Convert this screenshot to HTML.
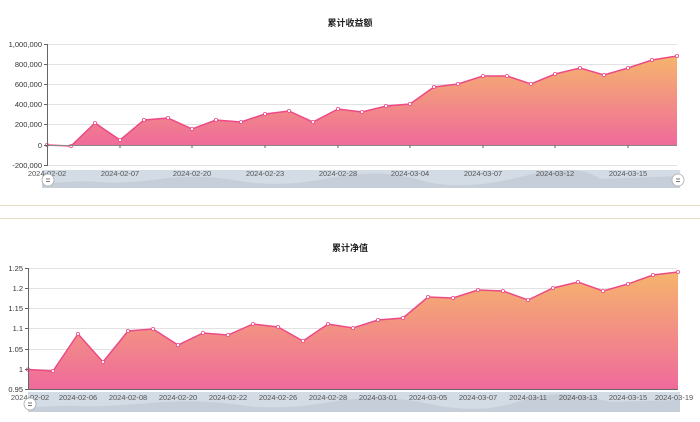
<!DOCTYPE html>
<html><head><meta charset="utf-8"><style>
html,body{margin:0;padding:0;background:#fff;width:700px;height:422px;overflow:hidden}
svg text{font-family:"Liberation Sans","Noto Sans CJK SC",sans-serif}
</style></head><body>
<svg width="700" height="422" viewBox="0 0 700 422" xmlns="http://www.w3.org/2000/svg">
<defs>
<linearGradient id="g1" x1="0" y1="0" x2="0" y2="1">
<stop offset="0" stop-color="#f6b46c"/><stop offset="1" stop-color="#ef6a9c"/></linearGradient>
</defs>
<!-- Chart 1 -->
<text x="350" y="26" font-size="9" font-weight="bold" text-anchor="middle" fill="#222">累计收益额</text>
<g stroke="#e2e2e2" stroke-width="1">
<line x1="47" y1="44.5" x2="677" y2="44.5"/><line x1="47" y1="64.5" x2="677" y2="64.5"/>
<line x1="47" y1="84.5" x2="677" y2="84.5"/><line x1="47" y1="104.5" x2="677" y2="104.5"/>
<line x1="47" y1="124.5" x2="677" y2="124.5"/><line x1="47" y1="165.5" x2="677" y2="165.5"/>
</g>
<polygon fill="url(#g1)" points="47,145 71,146 95,123 120,140 144,120 168,118 192,129 216,120 241,122 265,114 289,111 313,122 338,109 362,112 386,106 410,104 434,87 458,84 483,76 507,76 531,84 555,74 580,68 604,75 628,68 652,60 677,56 677,145"/>
<polyline fill="none" stroke="#ec4a86" stroke-width="1.5" points="47,145 71,146 95,123 120,140 144,120 168,118 192,129 216,120 241,122 265,114 289,111 313,122 338,109 362,112 386,106 410,104 434,87 458,84 483,76 507,76 531,84 555,74 580,68 604,75 628,68 652,60 677,56"/>
<g fill="#fff" stroke="#ec4a86" stroke-width="0.8">
<circle cx="47" cy="145" r="1.6"/><circle cx="71" cy="146" r="1.6"/><circle cx="95" cy="123" r="1.6"/><circle cx="120" cy="140" r="1.6"/><circle cx="144" cy="120" r="1.6"/><circle cx="168" cy="118" r="1.6"/><circle cx="192" cy="129" r="1.6"/><circle cx="216" cy="120" r="1.6"/><circle cx="241" cy="122" r="1.6"/><circle cx="265" cy="114" r="1.6"/><circle cx="289" cy="111" r="1.6"/><circle cx="313" cy="122" r="1.6"/><circle cx="338" cy="109" r="1.6"/><circle cx="362" cy="112" r="1.6"/><circle cx="386" cy="106" r="1.6"/><circle cx="410" cy="104" r="1.6"/><circle cx="434" cy="87" r="1.6"/><circle cx="458" cy="84" r="1.6"/><circle cx="483" cy="76" r="1.6"/><circle cx="507" cy="76" r="1.6"/><circle cx="531" cy="84" r="1.6"/><circle cx="555" cy="74" r="1.6"/><circle cx="580" cy="68" r="1.6"/><circle cx="604" cy="75" r="1.6"/><circle cx="628" cy="68" r="1.6"/><circle cx="652" cy="60" r="1.6"/><circle cx="677" cy="56" r="1.6"/>
</g>
<line x1="47" y1="145.5" x2="677" y2="145.5" stroke="#888" stroke-width="1"/>
<line x1="47.5" y1="44" x2="47.5" y2="166" stroke="#666" stroke-width="1"/>
<g stroke="#666"><line x1="44" y1="44.5" x2="47" y2="44.5"/><line x1="44" y1="64.5" x2="47" y2="64.5"/><line x1="44" y1="84.5" x2="47" y2="84.5"/><line x1="44" y1="104.5" x2="47" y2="104.5"/><line x1="44" y1="124.5" x2="47" y2="124.5"/><line x1="44" y1="145.5" x2="47" y2="145.5"/><line x1="44" y1="165.5" x2="47" y2="165.5"/>
<line x1="120" y1="145" x2="120" y2="148"/><line x1="192" y1="145" x2="192" y2="148"/><line x1="265" y1="145" x2="265" y2="148"/><line x1="338" y1="145" x2="338" y2="148"/><line x1="410" y1="145" x2="410" y2="148"/><line x1="483" y1="145" x2="483" y2="148"/><line x1="555" y1="145" x2="555" y2="148"/><line x1="628" y1="145" x2="628" y2="148"/></g>
<g font-size="7.5" fill="#333" text-anchor="end">
<text x="42" y="47">1,000,000</text><text x="42" y="67">800,000</text><text x="42" y="87">600,000</text><text x="42" y="107">400,000</text><text x="42" y="127">200,000</text><text x="42" y="148">0</text><text x="42" y="168">-200,000</text></g>
<rect x="42" y="170" width="638" height="18" fill="#d3dbe5"/>
<path d="M42,184 Q80,180 100,182 T160,179 T240,181 T330,178 T420,180 T520,177 T600,179 L680,176 L680,188 L42,188Z" fill="#c6ced9"/>
<g font-size="7.5" fill="#555" text-anchor="middle">
<text x="47" y="176">2024-02-02</text><text x="120" y="176">2024-02-07</text><text x="192" y="176">2024-02-20</text><text x="265" y="176">2024-02-23</text><text x="338" y="176">2024-02-28</text><text x="410" y="176">2024-03-04</text><text x="483" y="176">2024-03-07</text><text x="555" y="176">2024-03-12</text><text x="628" y="176">2024-03-15</text></g>
<g><circle cx="48" cy="180" r="6" fill="#fff" stroke="#aaa" stroke-width="0.8"/><line x1="46" y1="179" x2="50" y2="179" stroke="#777"/><line x1="46" y1="181.5" x2="50" y2="181.5" stroke="#777"/>
<circle cx="678" cy="180" r="6" fill="#fff" stroke="#aaa" stroke-width="0.8"/><line x1="676" y1="179" x2="680" y2="179" stroke="#777"/><line x1="676" y1="181.5" x2="680" y2="181.5" stroke="#777"/></g>
<line x1="0" y1="205.5" x2="700" y2="205.5" stroke="#e8dcc0"/>
<line x1="0" y1="218.5" x2="700" y2="218.5" stroke="#e8dcc0"/>
<!-- Chart 2 -->
<text x="350" y="251" font-size="9" font-weight="bold" text-anchor="middle" fill="#222">累计净值</text>
<g stroke="#e2e2e2"><line x1="28" y1="268.5" x2="677" y2="268.5"/><line x1="28" y1="288.5" x2="677" y2="288.5"/><line x1="28" y1="308.5" x2="677" y2="308.5"/><line x1="28" y1="328.5" x2="677" y2="328.5"/><line x1="28" y1="349.5" x2="677" y2="349.5"/><line x1="28" y1="369.5" x2="677" y2="369.5"/></g>
<polygon fill="url(#g1)" points="28,369.5 53,371 78,334 103,362 128,331 153,329 178,345 203,333 228,335 253,324 278,327 303,341 328,324 353,328 378,320 403,318 428,297 453,298 478,290 503,291 528,300 553,288 578,282 603,291 628,284 653,275 678,272 678,389 28,389"/>
<polyline fill="none" stroke="#ec4a86" stroke-width="1.5" points="28,369.5 53,371 78,334 103,362 128,331 153,329 178,345 203,333 228,335 253,324 278,327 303,341 328,324 353,328 378,320 403,318 428,297 453,298 478,290 503,291 528,300 553,288 578,282 603,291 628,284 653,275 678,272"/>
<g fill="#fff" stroke="#ec4a86" stroke-width="0.8">
<circle cx="28" cy="369.5" r="1.6"/><circle cx="53" cy="371" r="1.6"/><circle cx="78" cy="334" r="1.6"/><circle cx="103" cy="362" r="1.6"/><circle cx="128" cy="331" r="1.6"/><circle cx="153" cy="329" r="1.6"/><circle cx="178" cy="345" r="1.6"/><circle cx="203" cy="333" r="1.6"/><circle cx="228" cy="335" r="1.6"/><circle cx="253" cy="324" r="1.6"/><circle cx="278" cy="327" r="1.6"/><circle cx="303" cy="341" r="1.6"/><circle cx="328" cy="324" r="1.6"/><circle cx="353" cy="328" r="1.6"/><circle cx="378" cy="320" r="1.6"/><circle cx="403" cy="318" r="1.6"/><circle cx="428" cy="297" r="1.6"/><circle cx="453" cy="298" r="1.6"/><circle cx="478" cy="290" r="1.6"/><circle cx="503" cy="291" r="1.6"/><circle cx="528" cy="300" r="1.6"/><circle cx="553" cy="288" r="1.6"/><circle cx="578" cy="282" r="1.6"/><circle cx="603" cy="291" r="1.6"/><circle cx="628" cy="284" r="1.6"/><circle cx="653" cy="275" r="1.6"/><circle cx="678" cy="272" r="1.6"/>
</g>
<line x1="28" y1="389.5" x2="678" y2="389.5" stroke="#666"/>
<line x1="28.5" y1="268" x2="28.5" y2="390" stroke="#666"/>
<g stroke="#666"><line x1="25" y1="268.5" x2="28" y2="268.5"/><line x1="25" y1="288.5" x2="28" y2="288.5"/><line x1="25" y1="308.5" x2="28" y2="308.5"/><line x1="25" y1="328.5" x2="28" y2="328.5"/><line x1="25" y1="349.5" x2="28" y2="349.5"/><line x1="25" y1="369.5" x2="28" y2="369.5"/><line x1="25" y1="389.5" x2="28" y2="389.5"/></g>
<g font-size="7.5" fill="#333" text-anchor="end">
<text x="23" y="271">1.25</text><text x="23" y="291">1.2</text><text x="23" y="311">1.15</text><text x="23" y="331">1.1</text><text x="23" y="352">1.05</text><text x="23" y="372">1</text><text x="23" y="392">0.95</text></g>
<rect x="28" y="392" width="652" height="20" fill="#d3dbe5"/>
<path d="M28,408 Q60,405 80,406 T150,403 T240,405 T330,402 T430,404 T520,401 T610,402 L680,400 L680,412 L28,412Z" fill="#c6ced9"/>
<g font-size="7.5" fill="#555" text-anchor="middle">
<text x="30" y="400">2024-02-02</text><text x="78" y="400">2024-02-06</text><text x="128" y="400">2024-02-08</text><text x="178" y="400">2024-02-20</text><text x="228" y="400">2024-02-22</text><text x="278" y="400">2024-02-26</text><text x="328" y="400">2024-02-28</text><text x="378" y="400">2024-03-01</text><text x="428" y="400">2024-03-05</text><text x="478" y="400">2024-03-07</text><text x="528" y="400">2024-03-11</text><text x="578" y="400">2024-03-13</text><text x="628" y="400">2024-03-15</text><text x="674" y="400">2024-03-19</text></g>
<g><circle cx="30" cy="404" r="6" fill="#fff" stroke="#aaa" stroke-width="0.8"/><line x1="28" y1="403" x2="32" y2="403" stroke="#777"/><line x1="28" y1="405.5" x2="32" y2="405.5" stroke="#777"/></g>
</svg>
</body></html>
